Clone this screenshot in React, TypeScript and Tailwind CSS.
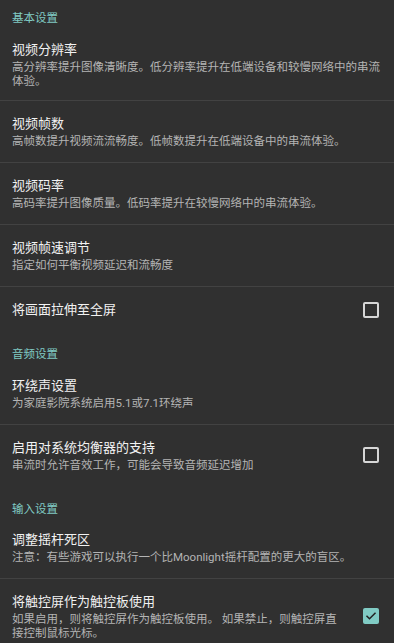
import React from "react";

type RowProps = {
  title: string;
  summary?: string;
  check?: "on" | "off";
  pad?: string;
  divider?: boolean;
};

const CheckBox = ({ on }: { on: boolean }) =>
  on ? (
    <div className="w-[16px] h-[16px] rounded-[2px] bg-[#80cbc4] flex items-center justify-center shrink-0">
      <svg width="12" height="12" viewBox="0 0 24 24" fill="none">
        <path
          d="M4 12.5l5 5L20 6.5"
          stroke="#222222"
          strokeWidth="3"
          strokeLinecap="square"
        />
      </svg>
    </div>
  ) : (
    <div className="w-[16px] h-[16px] rounded-[2px] border-2 border-[#d6d6d6] shrink-0" />
  );

const Header = ({ text, pad }: { text: string; pad: string }) => (
  <div className={`px-[12px] ${pad} text-[11.5px] leading-[16px] text-[#80cbc4]`}>
    {text}
  </div>
);

const Row = ({ title, summary, check, pad = "pt-[13px] pb-[14px]", divider = true }: RowProps) => (
  <>
    <div className={`flex items-center pl-[12px] ${check ? "pr-[15px]" : "pr-[10px]"} ${pad}`}>
      <div className="flex-1 min-w-0">
        <div className="text-[13px] leading-[20px] text-[#f2f2f2]">{title}</div>
        {summary && (
          <div className="text-[11.5px] leading-[14px] text-[#b4b4b4]">{summary}</div>
        )}
      </div>
      {check && (
        <div className="ml-[18px]">
          <CheckBox on={check === "on"} />
        </div>
      )}
    </div>
    {divider && <div className="h-px bg-[#424242]" />}
  </>
);

export default function App() {
  return (
    <div
      className="w-[394px] h-[643px] overflow-hidden bg-[#303030]"
      style={{ fontFamily: 'Roboto, "Noto Sans CJK SC", sans-serif' }}
    >
      <Header text="基本设置" pad="pt-[10px] pb-[1px]" />
      <Row
        title="视频分辨率"
        summary="高分辨率提升图像清晰度。低分辨率提升在低端设备和较慢网络中的串流体验。"
        pad="pt-[13px] pb-[12px]"
      />
      <Row
        title="视频帧数"
        summary="高帧数提升视频流流畅度。低帧数提升在低端设备中的串流体验。"
      />
      <Row
        title="视频码率"
        summary="高码率提升图像质量。低码率提升在较慢网络中的串流体验。"
      />
      <Row title="视频帧速调节" summary="指定如何平衡视频延迟和流畅度" />
      <Row
        title="将画面拉伸至全屏"
        check="off"
        pad="pt-[13px] pb-[14px]"
        divider={false}
      />

      <Header text="音频设置" pad="pt-[12px] pb-[1px]" />
      <Row title="环绕声设置" summary="为家庭影院系统启用5.1或7.1环绕声" />
      <Row
        title="启用对系统均衡器的支持"
        summary="串流时允许音效工作，可能会导致音频延迟增加"
        check="off"
        pad="pt-[13px] pb-[17px]"
        divider={false}
      />

      <Header text="输入设置" pad="pt-[12px]" />
      <Row
        title="调整摇杆死区"
        summary="注意：有些游戏可以执行一个比Moonlight摇杆配置的更大的盲区。"
      />
      <Row
        title="将触控屏作为触控板使用"
        summary="如果启用，则将触控屏作为触控板使用。 如果禁止，则触控屏直接控制鼠标光标。"
        check="on"
        divider={false}
      />
    </div>
  );
}
